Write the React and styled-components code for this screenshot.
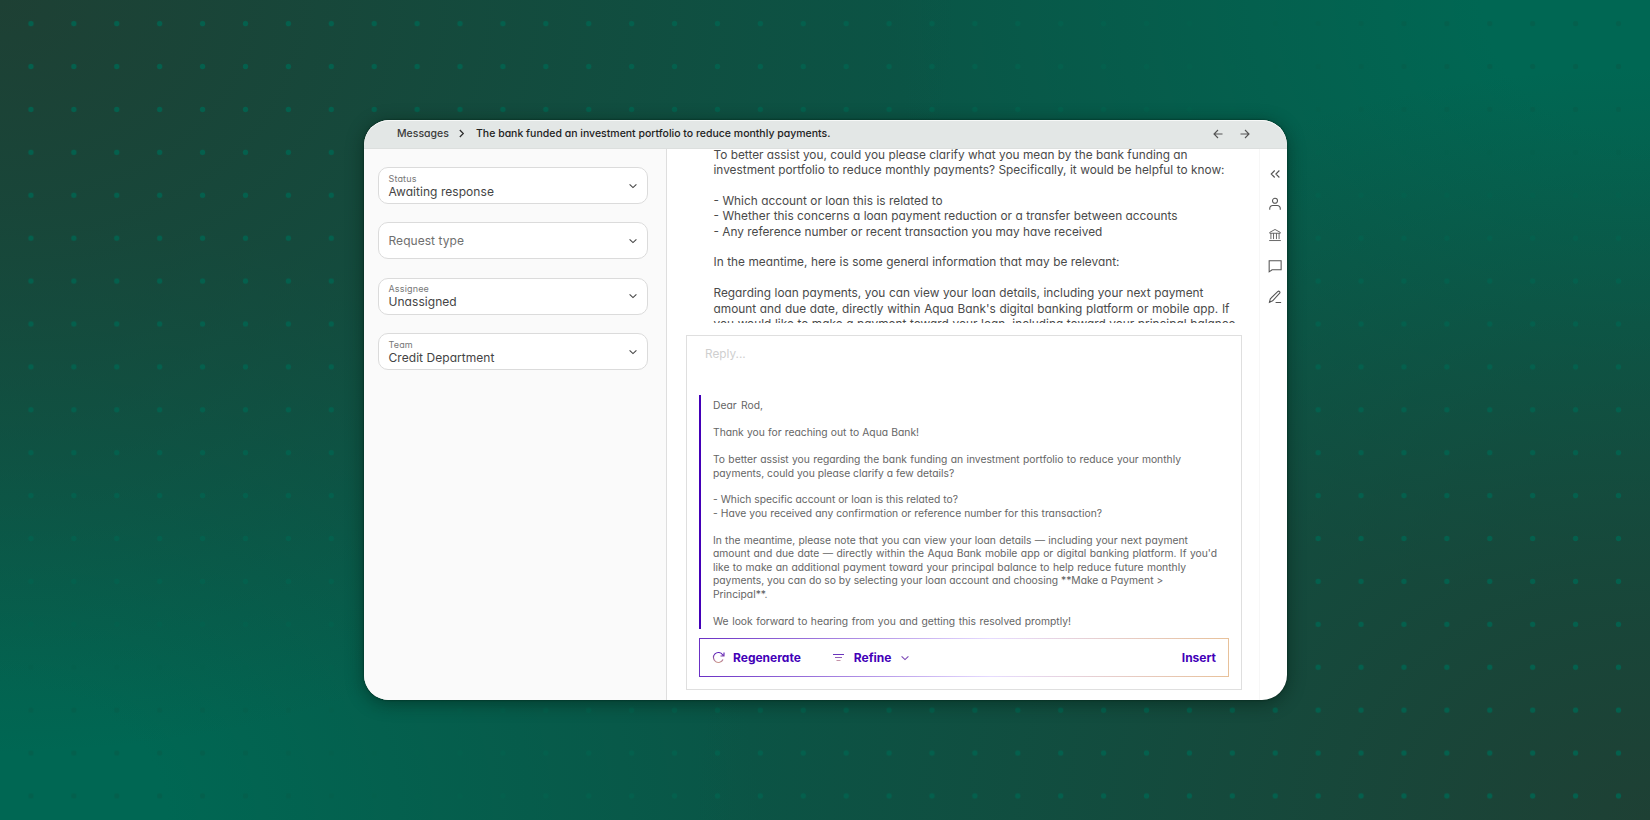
import React from "react";
import styled, { createGlobalStyle } from "styled-components";

const GlobalStyle = createGlobalStyle`
  * {
    box-sizing: border-box;
  }
  body {
    margin: 0;
    font-family: Inter, "Liberation Sans", sans-serif;
    font-feature-settings: "cv11";
    color: #4a4a4a;
  }
`;

const Page = styled.div`
  width: 1650px;
  height: 820px;
  padding: 120px 0 0 364px;
  overflow: hidden;
  background: radial-gradient(circle, #04604d 2.4px, transparent 3.1px) 9.5px
      2.2px / 42.92px 42.92px,
    radial-gradient(ellipse 58% 92% at 0 0, #1e4034, #1e403400),
    radial-gradient(ellipse 58% 92% at 100% 100%, #1e4034, #1e403400),
    radial-gradient(ellipse 46% 75% at 100% 0, #006753 22%, #00675300),
    radial-gradient(ellipse 46% 75% at 0 100%, #006753 22%, #00675300), #0a5546;
`;

const Window = styled.div`
  display: flex;
  flex-direction: column;
  width: 922.5px;
  height: 580px;
  border-radius: 25px;
  overflow: hidden;
  background: #fff;
  box-shadow: 0 0 2px rgba(0, 25, 15, 0.8), 0 3px 18px rgba(0, 20, 10, 0.45);
`;

const TopBar = styled.header`
  display: flex;
  align-items: center;
  height: 29px;
  padding: 0 37px 1px 33px;
  border-bottom: 1px solid #dcdfde;
  border-radius: 25px 25px 0 0;
  box-shadow: inset 0 1px 0 #f6f8f7;
  background: #e3e7e6;
  color: #2c2c2c;
  font-size: 10.5px;
  font-weight: 500;
`;

const Crumb = styled.span`
  width: ${(props) => props.$width}px;
  color: ${(props) => props.$color};
  white-space: nowrap;
  text-align-last: justify;
`;

const CrumbArrow = styled.span`
  display: flex;
  justify-content: center;
  width: 29px;
`;

const Arrows = styled.div`
  display: flex;
  gap: 17px;
  margin-left: auto;
  color: #555;
`;

const Body = styled.div`
  display: flex;
  flex: 1;
  min-height: 0;
`;

const Sidebar = styled.aside`
  display: flex;
  flex-direction: column;
  gap: 18.4px;
  width: 303px;
  padding: 18px 18px 0 14px;
  border-right: 1px solid #dedede;
  background: #fafafa;
`;

const Select = styled.div`
  display: flex;
  align-items: center;
  justify-content: space-between;
  height: 37px;
  padding: 0 10px 0 9.5px;
  border: 1px solid #dbdbdb;
  border-radius: 10px;
  background: #fff;
  color: #444;
`;

const SelectText = styled.div`
  display: flex;
  flex-direction: column;
`;

const Label = styled.span`
  color: #777;
  font-size: 9px;
  line-height: 11px;
  letter-spacing: 0.15px;
`;

const Value = styled.span`
  color: ${(props) => (props.$empty ? "#6f6f6f" : "#444")};
  font-size: 12px;
  line-height: 15px;
  letter-spacing: 0.05px;
`;

const Main = styled.main`
  display: flex;
  flex-direction: column;
  flex: 1;
  min-width: 0;
  padding: 0 17px 10px 19px;
`;

const Message = styled.div`
  display: flex;
  flex-direction: column;
  justify-content: flex-end;
  height: 174px;
  padding-left: 27.5px;
  overflow: hidden;
  color: #4a4a4a;
  font-size: 11.85px;
  line-height: 15.4px;
`;

const MessageText = styled.div`
  margin-bottom: -9.4px;
`;

const Line = styled.div`
  width: ${(props) => props.$width}px;
  height: ${(props) => props.$height}px;
  white-space: nowrap;
  text-align-last: justify;
`;

const ReplyBox = styled.div`
  display: flex;
  flex-direction: column;
  flex: 1;
  margin-top: 12px;
  padding: 11px 12px 12px;
  border: 1px solid #dfdfdf;
`;

const Placeholder = styled.div`
  height: 48px;
  padding-left: 6px;
  color: #cfcfcf;
  font-size: 11.8px;
  line-height: 15px;
`;

const Draft = styled.div`
  height: 234px;
  padding: 4.3px 0 0 12px;
  border-left: 2px solid #4300b8;
  color: #666;
  font-size: 10.3px;
  line-height: 13.46px;
`;

const Actions = styled.div`
  display: flex;
  align-items: center;
  height: 39px;
  margin-top: auto;
  padding: 0 11.5px 0 12px;
  border: 1px solid;
  border-image: linear-gradient(90deg, #6a30c4, #e6dbff 55%, #e8c19a) 1;
  color: #4300b8;
  font-size: 12px;
  font-weight: 700;
`;

const Action = styled.button`
  display: flex;
  align-items: center;
  gap: ${(props) => props.$gap || 0}px;
  margin: ${(props) => props.$margin || 0};
  padding: 0;
  border: 0;
  background: none;
  color: inherit;
  font: inherit;
  font-feature-settings: inherit;
`;

const Rail = styled.nav`
  display: flex;
  flex-direction: column;
  align-items: center;
  gap: 16.8px;
  width: 28px;
  padding: 17.5px 0 0 4px;
  border-left: 1px solid #f7f7f7;
  color: #555;
`;

const Icon = ({ size = 14, box = 24, stroke = 1.8, color, children }) => (
  <svg
    width={size}
    height={size}
    viewBox={`0 0 ${box} ${box}`}
    fill="none"
    stroke={color || "currentColor"}
    strokeWidth={stroke}
  >
    {children}
  </svg>
);

const Chevron = ({ color }) => (
  <Icon size={8} box={8} stroke={1.1} color={color}>
    <path d="M0.6 2.4 4 5.6 7.4 2.4" />
  </Icon>
);

const filters = [
  { label: "Status", value: "Awaiting response" },
  { value: "Request type" },
  { label: "Assignee", value: "Unassigned" },
  { label: "Team", value: "Credit Department" },
];

// [text, line width]
const message = [
  ["To better assist you, could you please clarify what you mean by the bank funding an", 474],
  ["investment portfolio to reduce monthly payments? Specifically, it would be helpful to know:", 511],
  [],
  ["- Which account or loan this is related to", 229],
  ["- Whether this concerns a loan payment reduction or a transfer between accounts", 464],
  ["- Any reference number or recent transaction you may have received", 387],
  [],
  ["In the meantime, here is some general information that may be relevant:", 406],
  [],
  ["Regarding loan payments, you can view your loan details, including your next payment", 490],
  ["amount and due date, directly within Aqua Bank's digital banking platform or mobile app. If", 516],
  ["you would like to make a payment toward your loan, including toward your principal balance", 522],
];

const draft = [
  ["Dear Rod,", 50],
  [],
  ["Thank you for reaching out to Aqua Bank!", 206],
  [],
  ["To better assist you regarding the bank funding an investment portfolio to reduce your monthly", 468],
  ["payments, could you please clarify a few details?", 241],
  [],
  ["- Which specific account or loan is this related to?", 245],
  ["- Have you received any confirmation or reference number for this transaction?", 389],
  [],
  ["In the meantime, please note that you can view your loan details — including your next payment", 475],
  ["amount and due date — directly within the Aqua Bank mobile app or digital banking platform. If you'd", 504],
  ["like to make an additional payment toward your principal balance to help reduce future monthly", 473],
  ["payments, you can do so by selecting your loan account and choosing **Make a Payment >", 450],
  ["Principal**.", 55],
  [],
  ["We look forward to hearing from you and getting this resolved promptly!", 358],
];

const Lines = ({ lines, height }) =>
  lines.map(([text, width], i) => (
    <Line key={i} $width={width || 0} $height={height}>
      {text}
    </Line>
  ));

const App = () => {
  return (
    <>
      <GlobalStyle />
      <Page>
        <Window>
          <TopBar>
            <Crumb $width={50} $color="#3c3c3c">
              Messages
            </Crumb>
            <CrumbArrow>
              <Icon size={9} box={9} stroke={1.2}>
                <path d="M2.8 1 6.3 4.5 2.8 8" />
              </Icon>
            </CrumbArrow>
            <Crumb $width={354} $color="#222">
              The bank funded an investment portfolio to reduce monthly
              payments.
            </Crumb>
            <Arrows>
              <Icon size={10} box={10} stroke={1.1}>
                <path d="M9.5 5H1M5 1 1 5l4 4" />
              </Icon>
              <Icon size={10} box={10} stroke={1.1}>
                <path d="M0.5 5H9M5 1l4 4-4 4" />
              </Icon>
            </Arrows>
          </TopBar>
          <Body>
            <Sidebar>
              {filters.map(({ label, value }) => (
                <Select key={value}>
                  <SelectText>
                    {label ? <Label>{label}</Label> : ""}
                    <Value $empty={!label}>{value}</Value>
                  </SelectText>
                  <Chevron />
                </Select>
              ))}
            </Sidebar>
            <Main>
              <Message>
                <MessageText>
                  <Lines lines={message} height={15.4} />
                </MessageText>
              </Message>
              <ReplyBox>
                <Placeholder>Reply...</Placeholder>
                <Draft>
                  <Lines lines={draft} height={13.46} />
                </Draft>
                <Actions>
                  <Action $gap={8}>
                    <svg width="13" height="13" viewBox="0 0 13 13" fill="none">
                      <defs>
                        <linearGradient
                          id="warm"
                          gradientUnits="userSpaceOnUse"
                          x1="0"
                          y1="0"
                          x2="0"
                          y2="13"
                        >
                          <stop offset="0.2" stopColor="#5a1cb8" />
                          <stop offset="1" stopColor="#e0ab84" />
                        </linearGradient>
                      </defs>
                      <path
                        d="M11 8.6A5 5 0 1 1 10.6 3.7L11.6 5M12 1.5V5H8.5"
                        stroke="url(#warm)"
                        strokeWidth="1.1"
                      />
                    </svg>
                    Regenerate
                  </Action>
                  <Action $gap={10} $margin="0 0 0 32px">
                    <svg width="11" height="9" viewBox="0 0 11 9" fill="none">
                      <path d="M0 1.5h11" stroke="#6a35bd" />
                      <path d="M2 4.5h7" stroke="#935fb8" />
                      <path d="M3.5 7.5h4" stroke="#c493a8" />
                    </svg>
                    Refine
                    <Chevron color="#7a45b5" />
                  </Action>
                  <Action $margin="0 0 0 auto">Insert</Action>
                </Actions>
              </ReplyBox>
            </Main>
            <Rail>
              <Icon stroke={1.9}>
                <path d="M11.5 6 5.5 12l6 6M19.5 6l-6 6 6 6" />
              </Icon>
              <Icon>
                <circle cx="12" cy="6.5" r="4.3" />
                <path d="M3 22v-2.5a5 5 0 0 1 5-5h8a5 5 0 0 1 5 5V22" />
              </Icon>
              <Icon stroke={1.5}>
                <path d="M3 9V7.5l9-5L21 7.5V9zM5 9v10M9.5 9v10M14.5 9v10M19 9v10M2 21.500h20" />
              </Icon>
              <Icon>
                <path d="M2 3h20.5v15.5H7L2 22z" />
              </Icon>
              <Icon>
                <path d="M2.5 21l1.5-6L17 2.5c2-1.500 4.500 1 3 3L8 18.5zM13 21.5h9.5" />
              </Icon>
            </Rail>
          </Body>
        </Window>
      </Page>
    </>
  );
};

export default App;
